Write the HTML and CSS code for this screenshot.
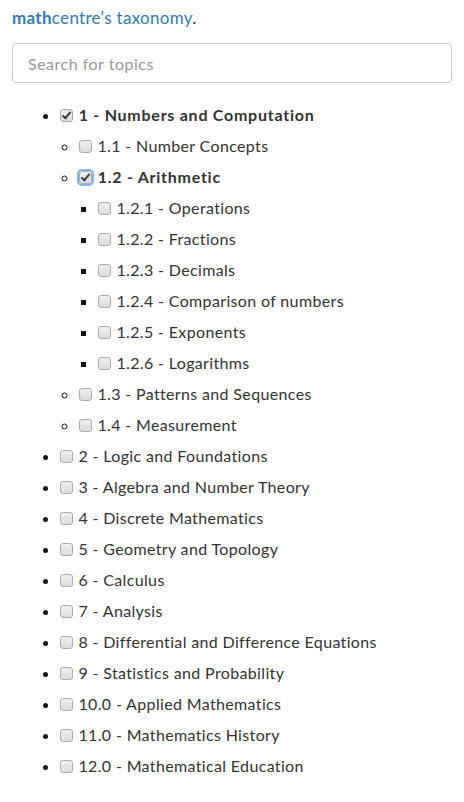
FILE: index.html
```html
<!DOCTYPE html>
<html lang="en">

<head>
    <meta charset="utf-8">
    <meta name="viewport" content="width=device-width, initial-scale=1">
    <title>taxonomy</title>
    <link rel="stylesheet" href="styles.css">
</head>

<body>
    <div class="page">
        <p class="intro"><a href="#"><b>math</b>centre's taxonomy</a>.</p>
        <input class="search" type="text" placeholder="Search for topics">
        <ul class="tree">
            <li class="on"><label><input type="checkbox" checked> 1 - Numbers and Computation</label>
                <ul>
                    <li><label><input type="checkbox"> 1.1 - Number Concepts</label></li>
                    <li class="on"><label><input type="checkbox" class="focus" checked> 1.2 - Arithmetic</label>
                        <ul>
                            <li><label><input type="checkbox"> 1.2.1 - Operations</label></li>
                            <li><label><input type="checkbox"> 1.2.2 - Fractions</label></li>
                            <li><label><input type="checkbox"> 1.2.3 - Decimals</label></li>
                            <li><label><input type="checkbox"> 1.2.4 - Comparison of numbers</label></li>
                            <li><label><input type="checkbox"> 1.2.5 - Exponents</label></li>
                            <li><label><input type="checkbox"> 1.2.6 - Logarithms</label></li>
                        </ul>
                    </li>
                    <li><label><input type="checkbox"> 1.3 - Patterns and Sequences</label></li>
                    <li><label><input type="checkbox"> 1.4 - Measurement</label></li>
                </ul>
            </li>
            <li><label><input type="checkbox"> 2 - Logic and Foundations</label></li>
            <li><label><input type="checkbox"> 3 - Algebra and Number Theory</label></li>
            <li><label><input type="checkbox"> 4 - Discrete Mathematics</label></li>
            <li><label><input type="checkbox"> 5 - Geometry and Topology</label></li>
            <li><label><input type="checkbox"> 6 - Calculus</label></li>
            <li><label><input type="checkbox"> 7 - Analysis</label></li>
            <li><label><input type="checkbox"> 8 - Differential and Difference Equations</label></li>
            <li><label><input type="checkbox"> 9 - Statistics and Probability</label></li>
            <li><label><input type="checkbox"> 10.0 - Applied Mathematics</label></li>
            <li><label><input type="checkbox"> 11.0 - Mathematics History</label></li>
            <li><label><input type="checkbox"> 12.0 - Mathematical Education</label></li>
        </ul>
    </div>
</body>

</html>
```
FILE: styles.css
```css
body {
    margin: 0;
    background: #fff;
    color: #333;
    font-family: Lato, "Liberation Sans", sans-serif;
    font-size: 16px;
    letter-spacing: 0.35px;
}

.page {
    padding: 0 12px;
}

.intro {
    margin: 6px 0 0;
    line-height: 24px;
    font-size: 17px;
    letter-spacing: 0.3px;
}

.intro a {
    color: #337ab7;
    text-decoration: none;
}

.search {
    display: block;
    box-sizing: border-box;
    width: 100%;
    height: 40px;
    margin-top: 13px;
    padding: 6px 15px;
    border: 1px solid #ccc;
    border-radius: 4px;
    font-family: inherit;
    font-size: 16px;
    letter-spacing: 0.5px;
    color: #555;
}

.search::placeholder {
    color: #999;
}

.tree {
    margin: 16px 0 0;
    padding-left: 48px;
}

.tree ul {
    margin: 0;
    padding-left: 19px;
}

.tree ul ul {
    list-style: square;
}

.tree li {
    line-height: 31px;
}

.tree li::marker {
    color: #111;
    letter-spacing: 0;
}

.tree li.on > label {
    font-weight: bold;
    letter-spacing: 0.75px;
}

.tree label {
    cursor: pointer;
}

.tree input[type=checkbox] {
    appearance: none;
    -webkit-appearance: none;
    position: relative;
    box-sizing: border-box;
    width: 13px;
    height: 13px;
    margin: 0 1px 0 0;
    vertical-align: -1px;
    border: 1px solid #acacac;
    border-radius: 3px;
    background: linear-gradient(#f0f0f0, #dcdcdc);
}

.tree input[type=checkbox]:checked::after {
    content: "";
    position: absolute;
    left: 3px;
    top: 0;
    width: 3px;
    height: 7px;
    border: solid #3c3c3c;
    border-width: 0 2px 2px 0;
    transform: rotate(40deg);
}

.tree input.focus {
    outline: 2px solid #7eb4ea;
    outline-offset: 0;
}
```
